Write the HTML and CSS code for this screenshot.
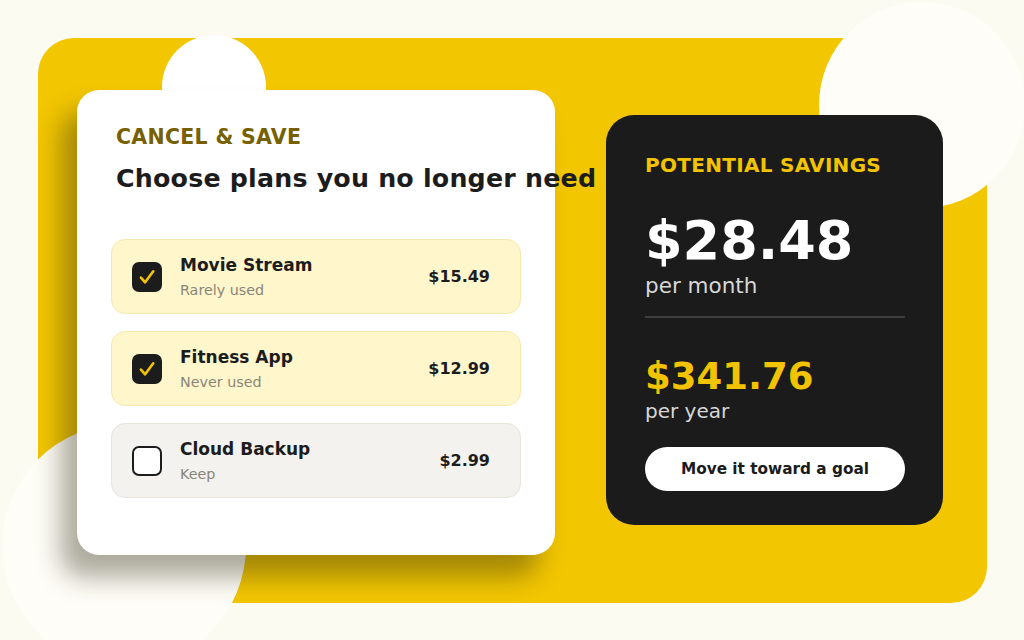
FILE: index.html
```html
<!DOCTYPE html>
<html lang="en">
<head>
    <meta charset="UTF-8">
    <meta name="viewport" content="width=device-width, initial-scale=1.0">
    <title>Cancel &amp; Save</title>
    <link rel="stylesheet" href="styles.css">
</head>
<body>
    <div class="stage">
        <div class="panel">
            <span class="blob blob-top"></span>
            <span class="blob blob-right"></span>
            <span class="blob blob-left"></span>

            <div class="card plans">
                <div class="plans-head">
                    <div class="eyebrow">CANCEL &amp; SAVE</div>
                    <h1>Choose plans you no longer need</h1>
                </div>
                <div class="plan-list">
                    <div class="plan selected">
                        <span class="check on">
                            <svg viewBox="0 0 20 20" width="22" height="22"><path d="M4.5 10.5l3.8 4.3 7.4-10" fill="none" stroke="#f2c300" stroke-width="2.4" stroke-linecap="round" stroke-linejoin="round"/></svg>
                        </span>
                        <div class="plan-info">
                            <div class="plan-name">Movie Stream</div>
                            <div class="plan-note">Rarely used</div>
                        </div>
                        <div class="plan-price">$15.49</div>
                    </div>
                    <div class="plan selected">
                        <span class="check on">
                            <svg viewBox="0 0 20 20" width="22" height="22"><path d="M4.5 10.5l3.8 4.3 7.4-10" fill="none" stroke="#f2c300" stroke-width="2.4" stroke-linecap="round" stroke-linejoin="round"/></svg>
                        </span>
                        <div class="plan-info">
                            <div class="plan-name">Fitness App</div>
                            <div class="plan-note">Never used</div>
                        </div>
                        <div class="plan-price">$12.99</div>
                    </div>
                    <div class="plan">
                        <span class="check"></span>
                        <div class="plan-info">
                            <div class="plan-name">Cloud Backup</div>
                            <div class="plan-note">Keep</div>
                        </div>
                        <div class="plan-price">$2.99</div>
                    </div>
                </div>
            </div>

            <div class="card savings">
                <div class="eyebrow yellow">POTENTIAL SAVINGS</div>
                <div class="big-amount">$28.48</div>
                <div class="period month">per month</div>
                <div class="divider"></div>
                <div class="year-amount">$341.76</div>
                <div class="period">per year</div>
                <button class="goal-btn">Move it toward a goal</button>
            </div>
        </div>
    </div>
</body>
</html>
```

FILE: styles.css
```css
* {
    box-sizing: border-box;
}

body {
    margin: 0;
    background: #fcfbf1;
    font-family: 'DejaVu Sans', 'Noto Sans', sans-serif;
    color: #1c1c1c;
}

.stage {
    width: 1024px;
    height: 640px;
    padding: 38px 37px 37px 38px;
    overflow: hidden;
    position: relative;
}

.panel {
    position: relative;
    height: 565px;
    background: #f2c600;
    border-radius: 36px;
    display: flex;
    align-items: center;
    padding: 4px 0 0 39px;
    gap: 51px;
}

/* decorative circles */
.blob {
    position: absolute;
    border-radius: 50%;
    background: #fefdf7;
}

.blob-top {
    left: 124px;
    top: -3px;
    width: 104px;
    height: 104px;
    background: #ffffff;
}

.blob-right {
    left: 781px;
    top: -36px;
    width: 206px;
    height: 206px;
}

.blob-left {
    left: -36px;
    top: 386px;
    width: 244px;
    height: 244px;
}

.card {
    position: relative;
    z-index: 1;
}

.plans {
    width: 478px;
    height: 465px;
    background: #ffffff;
    border-radius: 22px;
    padding: 35px 34px 33px;
    box-shadow: -16px 22px 26px rgba(50, 45, 20, 0.4);
}

.plans-head {
    padding-left: 5px;
}

.eyebrow {
    font-size: 20.5px;
    font-weight: bold;
    color: #766000;
    letter-spacing: 0.3px;
}

.eyebrow.yellow {
    color: #f2c300;
    font-size: 20px;
}

h1 {
    margin: 15px 0 0;
    font-size: 25.3px;
    font-weight: bold;
    white-space: nowrap;
    letter-spacing: 0.2px;
    color: #1c1c1c;
}

.plan-list {
    margin-top: 46px;
    display: flex;
    flex-direction: column;
    gap: 17px;
}

.plan {
    height: 75px;
    display: flex;
    align-items: center;
    padding: 0 30px 0 20px;
    border-radius: 14px;
    background: #f3f2ee;
    border: 1px solid #e7e5de;
}

.plan.selected {
    background: #fff6cc;
    border-color: #f6e9b0;
}

.check {
    width: 30px;
    height: 30px;
    border-radius: 7px;
    border: 2px solid #1c1c1c;
    background: #ffffff;
    display: flex;
    align-items: center;
    justify-content: center;
    flex-shrink: 0;
}

.check.on {
    background: #1c1c1c;
}

.plan-info {
    flex: 1;
    margin-left: 18px;
}

.plan-name {
    font-size: 17px;
    font-weight: bold;
    color: #1c1c1c;
}

.plan-note {
    font-size: 14.3px;
    color: #8a8677;
    margin-top: 7px;
}

.plan-price {
    font-size: 16px;
    font-weight: bold;
    color: #1c1c1c;
}

.savings {
    width: 337px;
    height: 410px;
    margin-bottom: 6px;
    background: #1b1b1b;
    border-radius: 28px;
    padding: 38px 38px 0 39px;
}

.big-amount {
    margin-top: 32px;
    font-size: 54px;
    font-weight: bold;
    color: #ffffff;
    line-height: 1.2;
}

.period {
    font-size: 20px;
    color: #d8d8d8;
    line-height: 1.2;
}

.period.month {
    font-size: 21.5px;
}

.divider {
    height: 2px;
    background: #3d3d3d;
    margin: 17px 0 37px;
}

.year-amount {
    font-size: 37px;
    font-weight: bold;
    color: #f2c300;
    line-height: 1.2;
}

.goal-btn {
    margin-top: 24px;
    width: 100%;
    height: 44px;
    border: none;
    border-radius: 22px;
    background: #ffffff;
    color: #1b1b1b;
    font-family: 'DejaVu Sans', sans-serif;
    font-size: 15.3px;
    font-weight: bold;
    cursor: pointer;
}
```
